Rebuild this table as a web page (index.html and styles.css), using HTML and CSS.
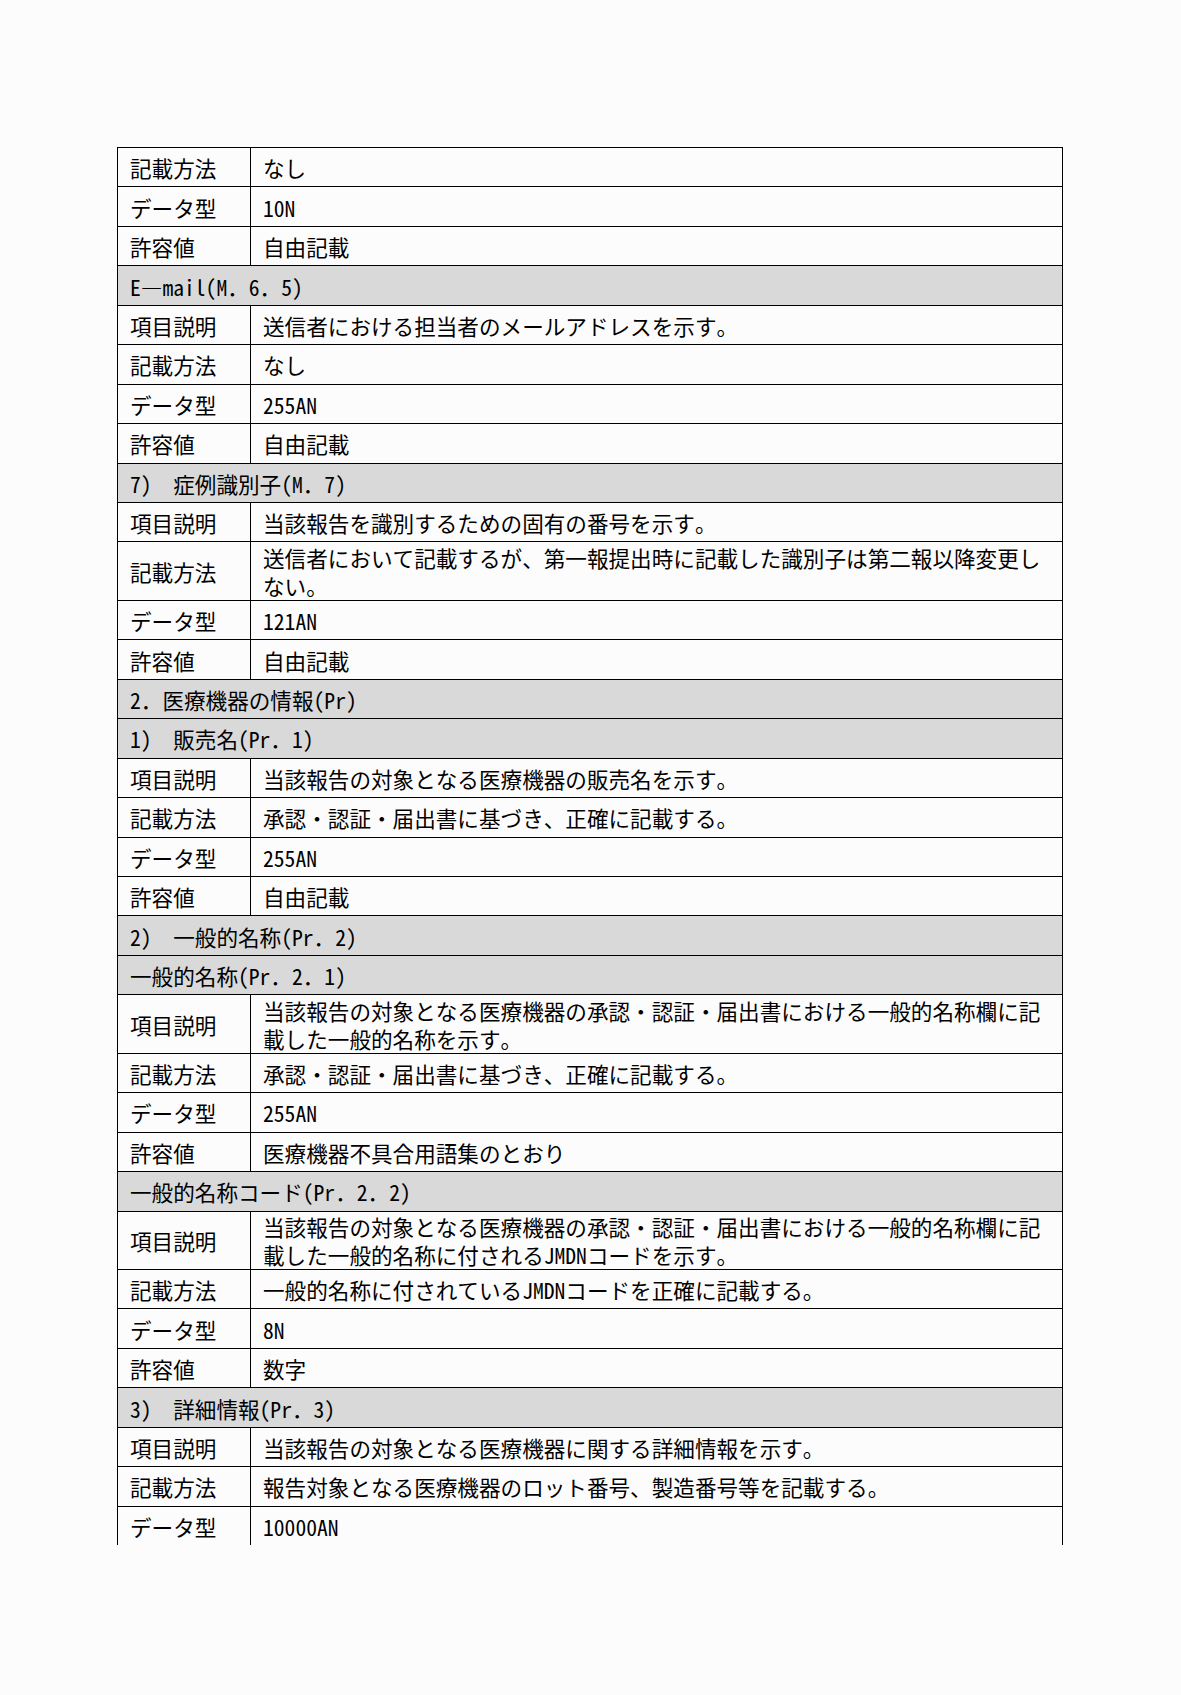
FILE: index.html
```html
<!DOCTYPE html>
<html lang="ja">
<head>
<meta charset="utf-8">
<title>項目説明</title>
<link rel="stylesheet" href="styles.css">
</head>
<body>
<main class="page">
<table class="spec">
<colgroup><col class="c-label"><col class="c-value"></colgroup>
<tbody>
<tr><th>記載方法</th><td>なし</td></tr>
<tr><th>データ型</th><td>10N</td></tr>
<tr><th>許容値</th><td>自由記載</td></tr>
<tr class="sec"><td colspan="2">E―mail(M．6．5)</td></tr>
<tr><th>項目説明</th><td>送信者における担当者のメールアドレスを示す。</td></tr>
<tr><th>記載方法</th><td>なし</td></tr>
<tr><th>データ型</th><td>255AN</td></tr>
<tr><th>許容値</th><td>自由記載</td></tr>
<tr class="sec"><td colspan="2">7)　症例識別子(M．7)</td></tr>
<tr><th>項目説明</th><td>当該報告を識別するための固有の番号を示す。</td></tr>
<tr class="two"><th>記載方法</th><td>送信者において記載するが、第一報提出時に記載した識別子は第二報以降変更し<br>ない。</td></tr>
<tr><th>データ型</th><td>121AN</td></tr>
<tr><th>許容値</th><td>自由記載</td></tr>
<tr class="sec"><td colspan="2">2．医療機器の情報(Pr)</td></tr>
<tr class="sec"><td colspan="2">1)　販売名(Pr．1)</td></tr>
<tr><th>項目説明</th><td>当該報告の対象となる医療機器の販売名を示す。</td></tr>
<tr><th>記載方法</th><td>承認・認証・届出書に基づき、正確に記載する。</td></tr>
<tr><th>データ型</th><td>255AN</td></tr>
<tr><th>許容値</th><td>自由記載</td></tr>
<tr class="sec"><td colspan="2">2)　一般的名称(Pr．2)</td></tr>
<tr class="sec"><td colspan="2">一般的名称(Pr．2．1)</td></tr>
<tr class="two"><th>項目説明</th><td>当該報告の対象となる医療機器の承認・認証・届出書における一般的名称欄に記<br>載した一般的名称を示す。</td></tr>
<tr><th>記載方法</th><td>承認・認証・届出書に基づき、正確に記載する。</td></tr>
<tr><th>データ型</th><td>255AN</td></tr>
<tr><th>許容値</th><td>医療機器不具合用語集のとおり</td></tr>
<tr class="sec"><td colspan="2">一般的名称コード(Pr．2．2)</td></tr>
<tr class="two"><th>項目説明</th><td>当該報告の対象となる医療機器の承認・認証・届出書における一般的名称欄に記<br>載した一般的名称に付されるJMDNコードを示す。</td></tr>
<tr><th>記載方法</th><td>一般的名称に付されているJMDNコードを正確に記載する。</td></tr>
<tr><th>データ型</th><td>8N</td></tr>
<tr><th>許容値</th><td>数字</td></tr>
<tr class="sec"><td colspan="2">3)　詳細情報(Pr．3)</td></tr>
<tr><th>項目説明</th><td>当該報告の対象となる医療機器に関する詳細情報を示す。</td></tr>
<tr><th>記載方法</th><td>報告対象となる医療機器のロット番号、製造番号等を記載する。</td></tr>
<tr class="last"><th>データ型</th><td>10000AN</td></tr>
</tbody>
</table>
</main>
</body>
</html>
```

FILE: styles.css
```css
html, body {
  margin: 0;
  padding: 0;
  background: #fcfcfc;
}

body {
  font-family: "Noto Sans Mono CJK JP", "Noto Sans CJK JP", monospace;
  font-size: 21.6px;
  font-weight: 300;
  color: #000;
}

.page {
  box-sizing: border-box;
  width: 1181px;
  height: 1695px;
  overflow: hidden;
  padding: 147px 0 0 117px;
}

.spec {
  border-collapse: collapse;
  table-layout: fixed;
  width: 946px;
}

.c-label {
  width: 133px;
}

.spec th,
.spec td {
  box-sizing: border-box;
  height: 39.44px;
  border: 1px solid #000;
  padding: 1px 0 0 12px;
  line-height: 29px;
  font-weight: 300;
  text-align: left;
  vertical-align: middle;
  white-space: nowrap;
}

.spec .two th,
.spec .two td {
  height: 58.5px;
  line-height: 28px;
}

.spec .sec td {
  background: #d9d9d9;
}

.spec .last th,
.spec .last td {
  border-bottom: none;
  height: 39px;
}
```
